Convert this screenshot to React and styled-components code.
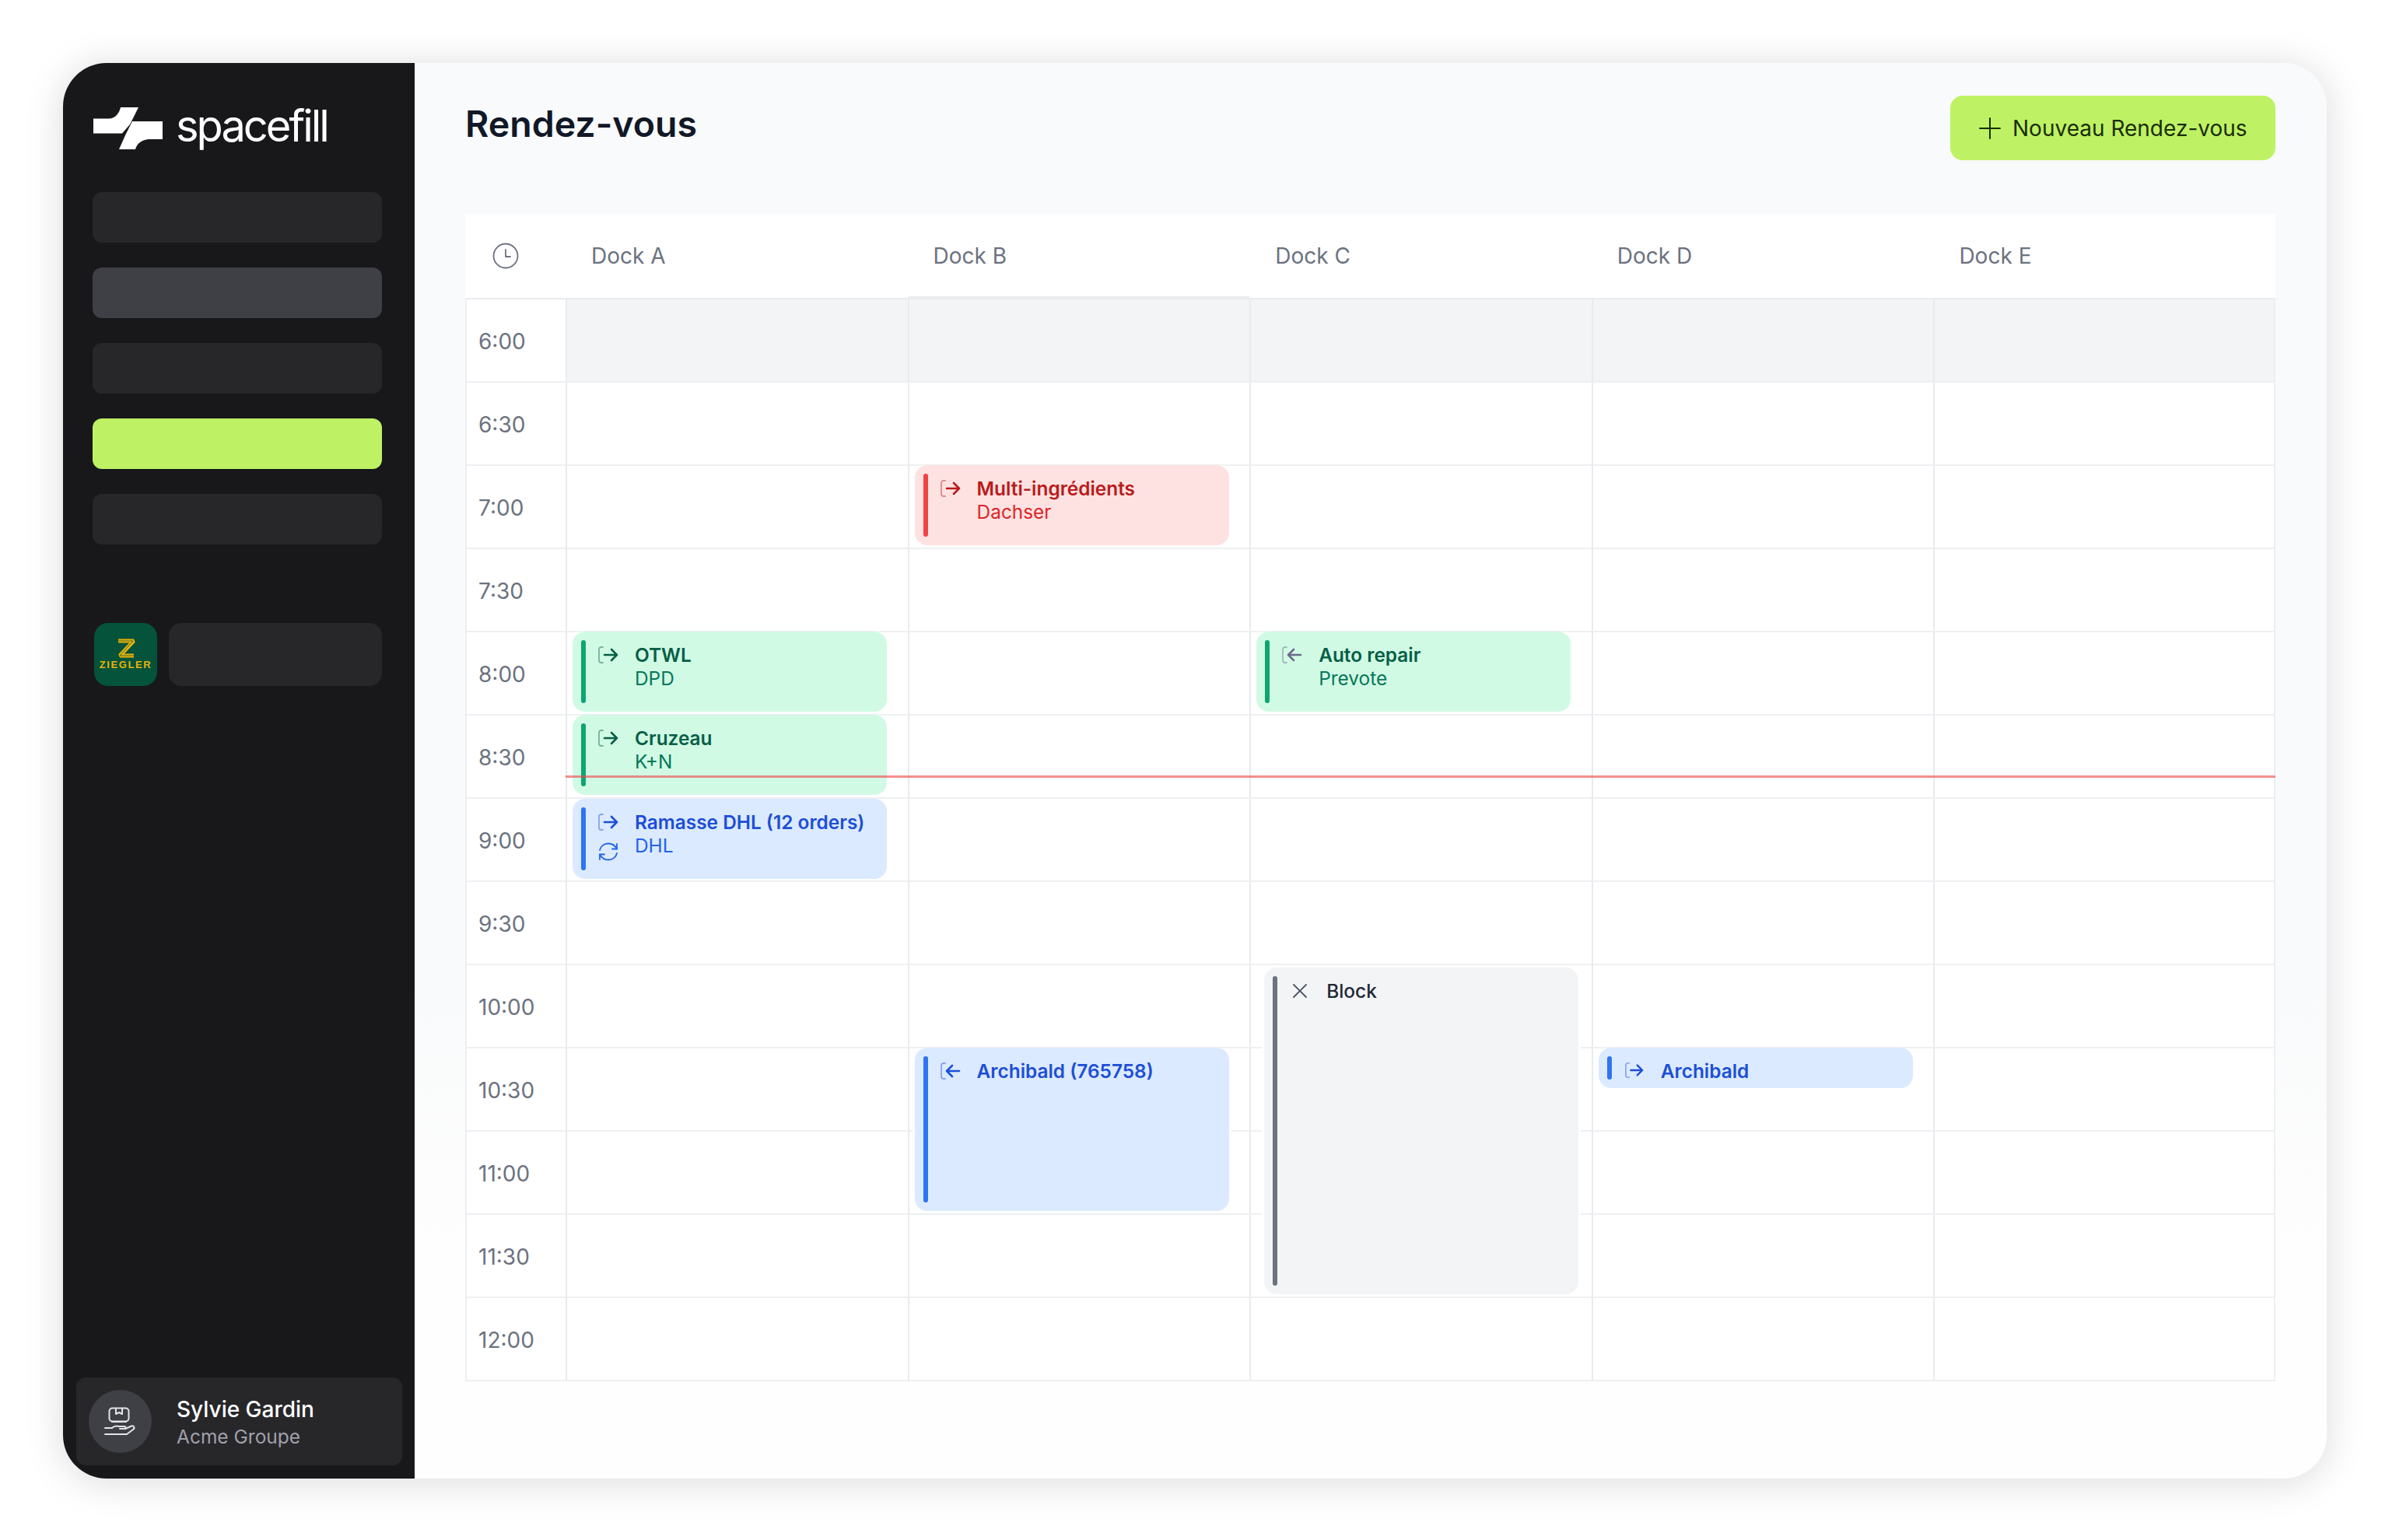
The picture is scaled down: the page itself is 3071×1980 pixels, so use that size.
import styled, { createGlobalStyle } from 'styled-components'

const ROW = 107

const hours = ['6:00', '6:30', '7:00', '7:30', '8:00', '8:30', '9:00', '9:30', '10:00', '10:30', '11:00', '11:30', '12:00']

const tones = {
    green: { bg: '#d1fae5', bar: '#0ea573', title: '#065f46', sub: '#047857', arrow: '#065f46' },
    mauve: { bg: '#d1fae5', bar: '#0ea573', title: '#065f46', sub: '#047857', arrow: '#6b6b8a' },
    blue: { bg: '#dbeafe', bar: '#2f74f2', title: '#1d4ed8', sub: '#2563eb', arrow: '#1d4ed8' },
    red: { bg: '#fee2e2', bar: '#ef4444', title: '#b91c1c', sub: '#dc2626', arrow: '#b91c1c' },
    gray: { bg: '#f3f4f6', bar: '#6b7280', title: '#1f2937', sub: '#4b5563', arrow: '#4b5563' },
}

const docks = [
    {
        name: 'Dock A',
        events: [
            { row: 4, height: 103, tone: 'green', icon: 'out', title: 'OTWL', sub: 'DPD' },
            { row: 5, height: 103, tone: 'green', icon: 'out', title: 'Cruzeau', sub: 'K+N' },
            { row: 6, offset: 1, height: 103, tone: 'blue', icon: 'out', sync: true, title: 'Ramasse DHL (12 orders)', sub: 'DHL' },
        ],
    },
    {
        name: 'Dock B',
        raised: true,
        events: [
            { row: 2, height: 103, tone: 'red', icon: 'out', title: 'Multi-ingrédients', sub: 'Dachser' },
            { row: 9, height: 210, tone: 'blue', icon: 'in', title: 'Archibald (765758)' },
        ],
    },
    {
        name: 'Dock C',
        events: [
            { row: 4, height: 103, tone: 'mauve', icon: 'in', title: 'Auto repair', sub: 'Prevote' },
            { row: 8, offset: 4, left: 19, height: 420, tone: 'gray', icon: 'x', title: 'Block', plain: true },
        ],
    },
    {
        name: 'Dock D',
        events: [{ row: 9, height: 52, tone: 'blue', icon: 'out', title: 'Archibald' }],
    },
    { name: 'Dock E', events: [] },
]

const navItems = ['#27272a', '#3f3f46', '#27272a', '#bef264', '#27272a']

const LogoMark = () => (
    <svg width="89" height="54" viewBox="0 0 89 54" fill="#fff">
        <path d="M0 14.5H20C28 14.5 33 8 35 0H58L47 22L37 33.5H0Z" />
        <path d="M50 18H89V41H72C64 41 56 46 54 54H33L41 36Z" />
    </svg>
)

const ZMark = () => (
    <svg width="28" height="28" viewBox="0 0 28 28" fill="none">
        <path d="M4 4H24L6 23H24" stroke="#eab308" strokeWidth="5" strokeLinejoin="bevel" />
        <path d="M4 4H23L6 23H24" stroke="#0f5a38" strokeWidth="0.8" />
    </svg>
)

const HandBoxIcon = () => (
    <svg width="50" height="50" viewBox="0 0 50 50" fill="none" stroke="#e4e4e7" strokeWidth="2" strokeLinecap="round" strokeLinejoin="round">
        <rect x="10.500" y="7.500" width="25" height="17" rx="4" />
        <path d="M19 8V15L23 13L27 15V8" />
        <path d="M14 25H32" />
        <path d="M5 33H14C17 30 20 30 23 31H30C32 31 32 34 30 34H24" />
        <path d="M31 34L39 30.500C42 29.500 44 33 41 35L33 41H5" />
    </svg>
)

const ClockIcon = () => (
    <svg width="34" height="34" viewBox="0 0 34 34" fill="none" stroke="#6b7280" strokeWidth="1.8" strokeLinecap="round" strokeLinejoin="round">
        <circle cx="17" cy="17" r="15.500" />
        <path d="M17 9V18H23" />
    </svg>
)

const PlusIcon = () => (
    <svg width="30" height="30" viewBox="0 0 30 30" fill="none" stroke="#1a2e05" strokeWidth="2" strokeLinecap="round">
        <path d="M15 2V28M2 15H28" />
    </svg>
)

// bracket stays on the left, only the arrow flips between in and out
const DoorIcon = ({ dir, color }) => (
    <svg width="26" height="26" viewBox="0 0 26 26" fill="none" stroke={color} strokeLinecap="round" strokeLinejoin="round">
        <path d="M6 3H4C2 3 1 4.500 1 6V20C1 21.500 2 23 4 23H6" strokeWidth="1.8" opacity="0.45" />
        {dir === 'out'
            ? <path d="M8 13H24M17 6L24 13L17 20" strokeWidth="2.6" />
            : <path d="M8 13H24M15 6L8 13L15 20" strokeWidth="2.6" />}
    </svg>
)

const SyncIcon = ({ color }) => (
    <svg width="26" height="26" viewBox="0 0 26 26" fill="none" stroke={color} strokeWidth="1.8" strokeLinecap="round" strokeLinejoin="round">
        <path d="M2 11C3 6 7.500 2.500 13 2.500C18 2.500 21.500 5 24 9.500" />
        <path d="M24 3V9.500H18" />
        <path d="M24 15C23 20 18.500 23.500 13 23.500C8 23.500 4.500 21 2 16.500" />
        <path d="M2 23V16.500H8" />
    </svg>
)

const CrossIcon = ({ color }) => (
    <svg width="26" height="26" viewBox="0 0 26 26" fill="none" stroke={color} strokeWidth="1.8" strokeLinecap="round">
        <path d="M5 5L21 21M21 5L5 21" />
    </svg>
)

const EventIcon = ({ kind, color }) => {
    if (kind === 'x') return <CrossIcon color={color} />
    return <DoorIcon dir={kind} color={color} />
}

const App = () => {
    return (
        <Page>
            <GlobalStyle />
            <Window>
                <Sidebar>
                    <LogoRow>
                        <LogoMark />
                        <Wordmark>spacefill</Wordmark>
                    </LogoRow>
                    <Nav>
                        {navItems.map((color, i) => <NavBar key={i} $color={color} />)}
                    </Nav>
                    <OrgRow>
                        <OrgLogo>
                            <ZMark />
                            <OrgName>ZIEGLER</OrgName>
                        </OrgLogo>
                        <OrgBar />
                    </OrgRow>
                    <UserCard>
                        <Avatar><HandBoxIcon /></Avatar>
                        <div>
                            <UserName>Sylvie Gardin</UserName>
                            <UserOrg>Acme Groupe</UserOrg>
                        </div>
                    </UserCard>
                </Sidebar>
                <Main>
                    <Header>
                        <Title>Rendez-vous</Title>
                        <PrimaryButton><PlusIcon />Nouveau Rendez-vous</PrimaryButton>
                    </Header>
                    <Calendar>
                        <HeadRow>
                            <HeadClock><ClockIcon /></HeadClock>
                            {docks.map(dock => <HeadCell key={dock.name} $raised={dock.raised}>{dock.name}</HeadCell>)}
                        </HeadRow>
                        <Body>
                            <div>
                                {hours.map(hour => <TimeCell key={hour}>{hour}</TimeCell>)}
                            </div>
                            {docks.map(dock => (
                                <DockColumn key={dock.name}>
                                    {hours.map((hour, i) => <Slot key={hour} $closed={i === 0} />)}
                                    {dock.events.map(ev => {
                                        const tone = tones[ev.tone]
                                        return (
                                            <Event
                                                key={ev.title}
                                                $top={ev.row * ROW + (ev.offset || 0) - 1}
                                                $left={ev.left || 9}
                                                $height={ev.height}
                                                $bg={tone.bg}
                                            >
                                                <EventBar $color={tone.bar} />
                                                <EventIcons>
                                                    <EventIcon kind={ev.icon} color={tone.arrow} />
                                                    {ev.sync && <SyncIcon color={tone.sub} />}
                                                </EventIcons>
                                                <EventText>
                                                    <EventTitle $color={tone.title} $plain={ev.plain}>{ev.title}</EventTitle>
                                                    {ev.sub && <EventSub $color={tone.sub}>{ev.sub}</EventSub>}
                                                </EventText>
                                            </Event>
                                        )
                                    })}
                                </DockColumn>
                            ))}
                            <NowLine />
                        </Body>
                    </Calendar>
                </Main>
            </Window>
        </Page>
    )
}

export default App

const GlobalStyle = createGlobalStyle`
html, body {
    margin: 0;
    padding: 0;
    background: #fff;
}
* {
    box-sizing: border-box;
}
body {
    font-family: Inter, "Liberation Sans", sans-serif;
}
`

const Page = styled.div`
width: 3071px;
height: 1980px;
padding: 81px 80px 79px 81px;
overflow: hidden;
`

const Window = styled.div`
display: flex;
height: 100%;
border-radius: 56px;
overflow: hidden;
box-shadow: 0 4px 50px rgba(0, 0, 0, 0.15);
`

const Sidebar = styled.aside`
width: 452px;
flex-shrink: 0;
display: flex;
flex-direction: column;
padding: 57px 42px 17px 38px;
background: #18181b;
`

const LogoRow = styled.div`
display: flex;
align-items: center;
gap: 17px;
height: 54px;
margin-left: 1px;
`

const Wordmark = styled.span`
margin-top: -6px;
font-size: 56px;
font-weight: 400;
line-height: 54px;
letter-spacing: -3px;
color: #fff;
`

const Nav = styled.nav`
display: flex;
flex-direction: column;
gap: 32px;
margin-top: 55px;
`

const NavBar = styled.div`
height: 65px;
border-radius: 12px;
background: ${props => props.$color};
`

const OrgRow = styled.div`
display: flex;
gap: 15px;
margin-top: 101px;
padding-left: 2px;
`

const OrgLogo = styled.div`
width: 81px;
height: 81px;
display: flex;
flex-direction: column;
align-items: center;
padding-top: 19px;
border-radius: 18px;
background: #04533a;
`

const OrgName = styled.span`
font-family: "Liberation Sans", sans-serif;
font-size: 13px;
font-weight: 700;
line-height: 12px;
letter-spacing: 1.6px;
margin-top: 1px;
color: #eab308;
`

const OrgBar = styled.div`
flex: 1;
border-radius: 16px;
background: #27272a;
`

const UserCard = styled.div`
display: flex;
align-items: center;
gap: 32px;
height: 113px;
margin: auto -26px 0 -21px;
padding-left: 16px;
border-radius: 12px;
background: #27272a;
`

const Avatar = styled.div`
width: 81px;
height: 81px;
display: flex;
align-items: center;
justify-content: center;
border-radius: 50%;
background: #3f3f46;
`

const UserName = styled.div`
font-size: 28px;
font-weight: 500;
line-height: 38px;
color: #fff;
`

const UserOrg = styled.div`
font-size: 24.500px;
line-height: 32px;
color: #a1a1aa;
`

const Main = styled.main`
flex: 1;
padding: 42px 66px 0 65px;
background: linear-gradient(#f9fafb 65%, #fefefe 85%);
`

const Header = styled.header`
display: flex;
align-items: flex-start;
justify-content: space-between;
height: 83px;
`

const Title = styled.h1`
margin: 0;
font-size: 46.500px;
font-weight: 600;
line-height: 72px;
color: #111827;
`

const PrimaryButton = styled.button`
display: flex;
align-items: center;
gap: 14px;
width: 418px;
height: 83px;
padding: 0 0 0 36px;
border: none;
border-radius: 16px;
font-family: inherit;
font-size: 28px;
line-height: 32px;
color: #1a2e05;
background: #bef264;
cursor: pointer;
`

const Calendar = styled.section`
margin-top: 69px;
background: #fff;
`

const HeadRow = styled.div`
display: grid;
grid-template-columns: 129px repeat(5, 1fr);
height: 110px;
border-bottom: 2px solid #e9ebee;
`

const HeadClock = styled.div`
display: flex;
align-items: center;
padding-left: 35px;
`

const HeadCell = styled.div`
display: flex;
align-items: center;
padding-left: 33px;
font-size: 28px;
color: #6b7280;
box-shadow: ${props => props.$raised ? 'inset 0 -2px 0 #e9ebee' : 'none'};
`

const Body = styled.div`
position: relative;
display: grid;
grid-template-columns: 129px repeat(5, 1fr);
`

const TimeCell = styled.div`
display: flex;
align-items: center;
height: ${ROW}px;
padding: 3px 0 0 15px;
font-size: 28px;
color: #6b7280;
border-left: 2px solid #eeeff2;
border-bottom: 2px solid #eeeff2;
`

const Slot = styled.div`
height: ${ROW}px;
border-left: 2px solid #e9ebee;
border-bottom: 2px solid #eeeff2;
background: ${props => props.$closed ? '#f3f4f6' : '#fff'};
`

const DockColumn = styled.div`
position: relative;

&:nth-last-child(2) ${Slot} {
    border-right: 2px solid #eeeff2;
}
`

const Event = styled.article`
position: absolute;
top: ${props => props.$top}px;
left: ${props => props.$left}px;
width: 404px;
height: ${props => props.$height}px;
display: flex;
padding: 11px 0 11px 11px;
border-radius: 16px;
background: ${props => props.$bg};
box-shadow: 3px 0 0 #fff, -3px 0 0 #fff;
`

const EventBar = styled.div`
width: 6px;
border-radius: 3px;
background: ${props => props.$color};
`

const EventIcons = styled.div`
display: flex;
flex-direction: column;
gap: 12px;
width: 26px;
margin: 6px 0 0 16px;
`

const EventText = styled.div`
margin: 4px 0 0 21px;
font-size: 24.400px;
line-height: 30px;
`

const EventTitle = styled.div`
font-weight: ${props => props.$plain ? 500 : 600};
color: ${props => props.$color};
`

const EventSub = styled.div`
color: ${props => props.$color};
`

const NowLine = styled.div`
position: absolute;
top: 612px;
left: 129px;
right: 0;
height: 3px;
background: rgba(239, 68, 68, 0.6);
`
